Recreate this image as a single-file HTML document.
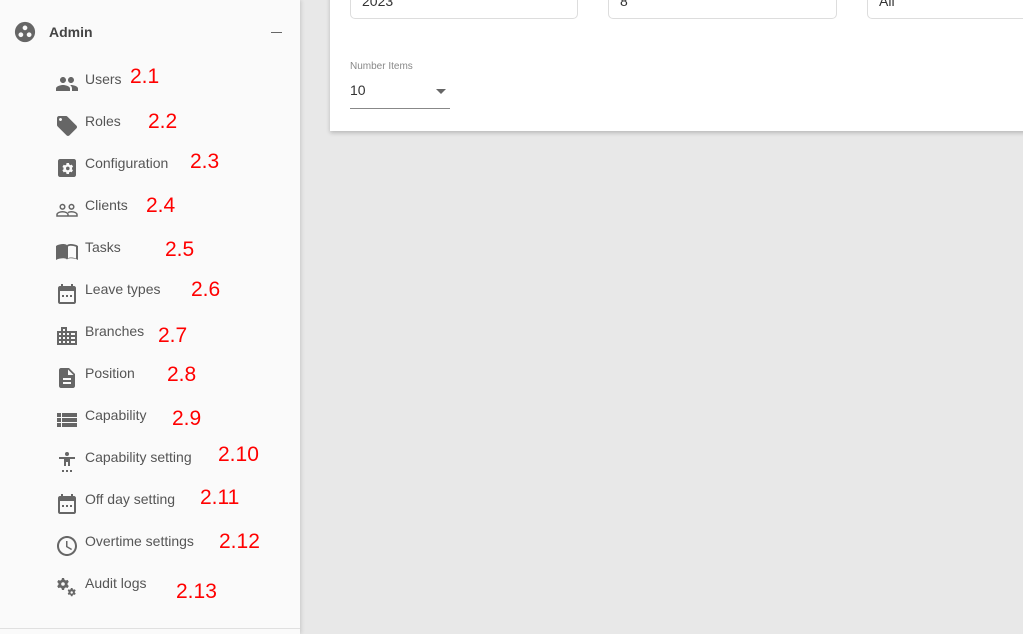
<!DOCTYPE html>
<html><head><meta charset="utf-8"><style>
*{margin:0;padding:0;box-sizing:border-box}
body{width:1023px;height:634px;overflow:hidden;background:#e8e8e8;font-family:"Liberation Sans",Arial,sans-serif;position:relative}
#side{position:absolute;left:0;top:0;width:300px;height:634px;background:#fafafa;box-shadow:1px 0 4px rgba(0,0,0,.15)}
#side .line{position:absolute;left:0;top:628px;width:300px;height:1px;background:#e0e0e0}
.it{position:absolute;left:85px;font-size:14px;color:#555;line-height:16px}
.ic{position:absolute;left:55px;width:24px;height:24px;fill:#666}
.r{position:absolute;font-size:21px;color:#f00;line-height:22px;font-family:"Liberation Sans",sans-serif}
#card{position:absolute;left:330px;top:-10px;width:720px;height:141px;background:#fff;box-shadow:0 2px 4px rgba(0,0,0,.2)}
.inp{position:absolute;top:-20px;height:39px;border:1px solid #ddd;border-radius:5px;background:#fff;font-size:14px;color:#333;padding:10px 0 0 11px}
</style></head><body>
<div id="side">
<svg style="position:absolute;left:14px;top:21px;width:22px;height:22px" viewBox="0 0 24 24"><circle cx="12" cy="12" r="11" fill="#666"/><circle cx="12" cy="7.5" r="2.6" fill="#fafafa"/><circle cx="7.5" cy="15" r="2.6" fill="#fafafa"/><circle cx="16.5" cy="15" r="2.6" fill="#fafafa"/></svg>
<div style="position:absolute;left:49px;top:24px;font-size:14px;font-weight:bold;color:#444">Admin</div>
<div style="position:absolute;left:271px;top:32px;width:11px;height:1px;background:#666"></div>

<svg class="ic" style="top:72px" viewBox="0 0 24 24"><path d="M16 11c1.66 0 2.99-1.34 2.99-3S17.66 5 16 5c-1.66 0-3 1.34-3 3s1.34 3 3 3zm-8 0c1.66 0 2.99-1.34 2.99-3S9.66 5 8 5C6.34 5 5 6.34 5 8s1.34 3 3 3zm0 2c-2.33 0-7 1.17-7 3.5V19h14v-2.5c0-2.33-4.67-3.5-7-3.5zm8 0c-.29 0-.62.02-.97.05 1.16.84 1.97 1.97 1.97 3.45V19h6v-2.5c0-2.33-4.67-3.5-7-3.5z"/></svg>
<div class="it" style="top:71px">Users</div><div class="r" style="left:130px;top:66px">2.1</div>

<svg class="ic" style="top:114px" viewBox="0 0 24 24"><path d="M21.41 11.58l-9-9C12.05 2.22 11.55 2 11 2H4c-1.1 0-2 .9-2 2v7c0 .55.22 1.05.59 1.42l9 9c.36.36.86.58 1.41.58.55 0 1.05-.22 1.41-.59l7-7c.37-.36.59-.86.59-1.41 0-.55-.23-1.06-.59-1.42zM5.5 7C4.67 7 4 6.33 4 5.5S4.67 4 5.5 4 7 4.67 7 5.5 6.33 7 5.5 7z"/></svg>
<div class="it" style="top:113px">Roles</div><div class="r" style="left:148px;top:111px">2.2</div>

<svg class="ic" style="top:156px" viewBox="0 0 24 24"><path d="M19 3H5c-1.1 0-2 .9-2 2v14c0 1.1.9 2 2 2h14c1.1 0 2-.9 2-2V5c0-1.1-.9-2-2-2zm-2.2 10.2l1.2.9-1.3 2.2-1.4-.6c-.4.3-.8.5-1.2.7L14 18h-2.5l-.2-1.5c-.5-.2-.9-.4-1.2-.7l-1.4.6-1.3-2.2 1.2-.9c0-.3-.1-.5-.1-.8s0-.5.1-.8L7.4 11l1.3-2.2 1.4.6c.4-.3.8-.5 1.2-.7L11.5 7H14l.2 1.5c.5.2.9.4 1.2.7l1.4-.6 1.3 2.2-1.2.9c.1.3.1.5.1.8s0 .6-.2.9zM12.8 10.6a1.8 1.8 0 100 3.6 1.8 1.8 0 000-3.6z"/></svg>
<div class="it" style="top:155px">Configuration</div><div class="r" style="left:190px;top:151px">2.3</div>

<svg class="ic" style="top:198px" viewBox="0 0 24 24"><path fill="none" stroke="#666" stroke-width="1.5" d="M7.5 6.5a2.3 2.3 0 110 4.6 2.3 2.3 0 010-4.6zm9 0a2.3 2.3 0 110 4.6 2.3 2.3 0 010-4.6zM2 18v-1.5c0-1.6 3-2.8 5.5-2.8s5.5 1.2 5.5 2.8V18zm11-3.5c1-.5 2.3-.8 3.5-.8 2.5 0 5.5 1.2 5.5 2.8V18h-9"/></svg>
<div class="it" style="top:197px">Clients</div><div class="r" style="left:146px;top:195px">2.4</div>

<svg class="ic" style="top:240px" viewBox="0 0 24 24"><path d="M1 6c2-1.5 5-2 7-2s4 .5 4 1.5C12 4.5 14 4 16 4s5 .5 7 2v14c-2-1.3-5-1.7-7-1.7s-4 .5-4 1.7c0-1.2-2-1.7-4-1.7S3 18.7 1 20zm12 .5v11.8c1-.6 2-.8 3-.8 1.6 0 3.3.3 5 1V6.8c-1.7-.6-3.4-1-5-1-1 0-2 .2-3 .7z"/></svg>
<div class="it" style="top:239px">Tasks</div><div class="r" style="left:165px;top:239px">2.5</div>

<svg class="ic" style="top:282px" viewBox="0 0 24 24"><path d="M19 4h-1V2h-2v2H8V2H6v2H5c-1.11 0-2 .9-2 2v14c0 1.1.89 2 2 2h14c1.1 0 2-.9 2-2V6c0-1.1-.9-2-2-2zm0 16H5V9h14v11zM7 13h2v2H7zm4 0h2v2h-2zm4 0h2v2h-2z"/></svg>
<div class="it" style="top:281px">Leave types</div><div class="r" style="left:191px;top:279px">2.6</div>

<svg class="ic" style="top:324px" viewBox="0 0 24 24"><path d="M12 7V3H6v4H2v14h20V7h-10zM6 19H4v-2h2v2zm0-4H4v-2h2v2zm0-4H4V9h2v2zm4 8H8v-2h2v2zm0-4H8v-2h2v2zm0-4H8V9h2v2zm0-4H8V5h2v2zm4 12h-2v-2h2v2zm0-4h-2v-2h2v2zm0-4h-2V9h2v2zm6 8h-4v-2h4v2zm0-4h-4v-2h4v2zm0-4h-4V9h4v2z" /></svg>
<div class="it" style="top:323px">Branches</div><div class="r" style="left:158px;top:325px">2.7</div>

<svg class="ic" style="top:366px" viewBox="0 0 24 24"><path d="M14 2H6c-1.1 0-2 .9-2 2v16c0 1.1.9 2 2 2h12c1.1 0 2-.9 2-2V8l-6-6zm2 16H8v-2h8v2zm0-4H8v-2h8v2zm-3-5V3.5L18.5 9H13z"/></svg>
<div class="it" style="top:365px">Position</div><div class="r" style="left:167px;top:364px">2.8</div>

<svg class="ic" style="top:408px" viewBox="0 0 24 24"><path d="M2 14h4v-4H2v4zm0 5h4v-4H2v4zM2 9h4V5H2v4zm5 5h15v-4H7v4zm0 5h15v-4H7v4zM7 5v4h15V5H7z"/></svg>
<div class="it" style="top:407px">Capability</div><div class="r" style="left:172px;top:408px">2.9</div>

<svg class="ic" style="top:450px" viewBox="0 0 24 24"><path d="M12 2a2 2 0 110 4 2 2 0 010-4zm8 5H4v2h5v7h2v-4h2v4h2V9h5z M7 20h2v2H7zm4 0h2v2h-2zm4 0h2v2h-2z"/></svg>
<div class="it" style="top:449px">Capability setting</div><div class="r" style="left:218px;top:444px">2.10</div>

<svg class="ic" style="top:492px" viewBox="0 0 24 24"><path d="M19 4h-1V2h-2v2H8V2H6v2H5c-1.11 0-2 .9-2 2v14c0 1.1.89 2 2 2h14c1.1 0 2-.9 2-2V6c0-1.1-.9-2-2-2zm0 16H5V9h14v11zM7 13h2v2H7zm4 0h2v2h-2zm4 0h2v2h-2z"/></svg>
<div class="it" style="top:491px">Off day setting</div><div class="r" style="left:200px;top:487px">2.11</div>

<svg class="ic" style="top:534px" viewBox="0 0 24 24"><path d="M11.99 2C6.47 2 2 6.48 2 12s4.47 10 9.99 10C17.52 22 22 17.52 22 12S17.52 2 11.99 2zM12 20c-4.42 0-8-3.58-8-8s3.58-8 8-8 8 3.58 8 8-3.58 8-8 8zm.5-13H11v6l5.25 3.15.75-1.23-4.5-2.67z"/></svg>
<div class="it" style="top:533px">Overtime settings</div><div class="r" style="left:219px;top:531px">2.12</div>

<svg class="ic" style="top:576px" viewBox="0 0 24 24"><path d="M9 2l.5 1.8c.5.2.9.4 1.3.7l1.8-.6 1.2 2-1.3 1.3c.1.5.1 1 0 1.5l1.3 1.3-1.2 2-1.8-.6c-.4.3-.8.5-1.3.7L9 14H7l-.5-1.8c-.5-.2-.9-.4-1.3-.7l-1.8.6-1.2-2 1.3-1.3c-.1-.5-.1-1 0-1.5L2.2 6l1.2-2 1.8.6c.4-.3.8-.5 1.3-.7L7 2zm-1 4.2a1.8 1.8 0 100 3.6 1.8 1.8 0 000-3.6zM17.5 12l.3 1.2c.3.1.6.3.9.5l1.2-.4.8 1.4-.9.9v1l.9.9-.8 1.4-1.2-.4c-.3.2-.6.4-.9.5l-.3 1.3h-1.6l-.3-1.3c-.3-.1-.6-.3-.9-.5l-1.2.4-.8-1.4.9-.9v-1l-.9-.9.8-1.4 1.2.4c.3-.2.6-.4.9-.5l.3-1.2zm-.8 3.3a1.2 1.2 0 100 2.4 1.2 1.2 0 000-2.4z"/></svg>
<div class="it" style="top:575px">Audit logs</div><div class="r" style="left:176px;top:581px">2.13</div>
<div class="line"></div>
</div>

<div id="card">
<div class="inp" style="left:20px;width:228px;top:-10px"><span style="position:relative;top:2px">2023</span></div>
<div class="inp" style="left:278px;width:229px;top:-10px"><span style="position:relative;top:2px">8</span></div>
<div class="inp" style="left:537px;width:200px;top:-10px"><span style="position:relative;top:2px">All</span></div>
<div style="position:absolute;left:20px;top:71px;font-size:10px;color:#888">Number Items</div>
<div style="position:absolute;left:20px;top:92px;font-size:14px;color:#333">10</div>
<div style="position:absolute;left:106px;top:99px;width:0;height:0;border-left:5px solid transparent;border-right:5px solid transparent;border-top:5px solid #666"></div>
<div style="position:absolute;left:20px;top:118px;width:100px;height:1px;background:#888"></div>
</div>
</body></html>
